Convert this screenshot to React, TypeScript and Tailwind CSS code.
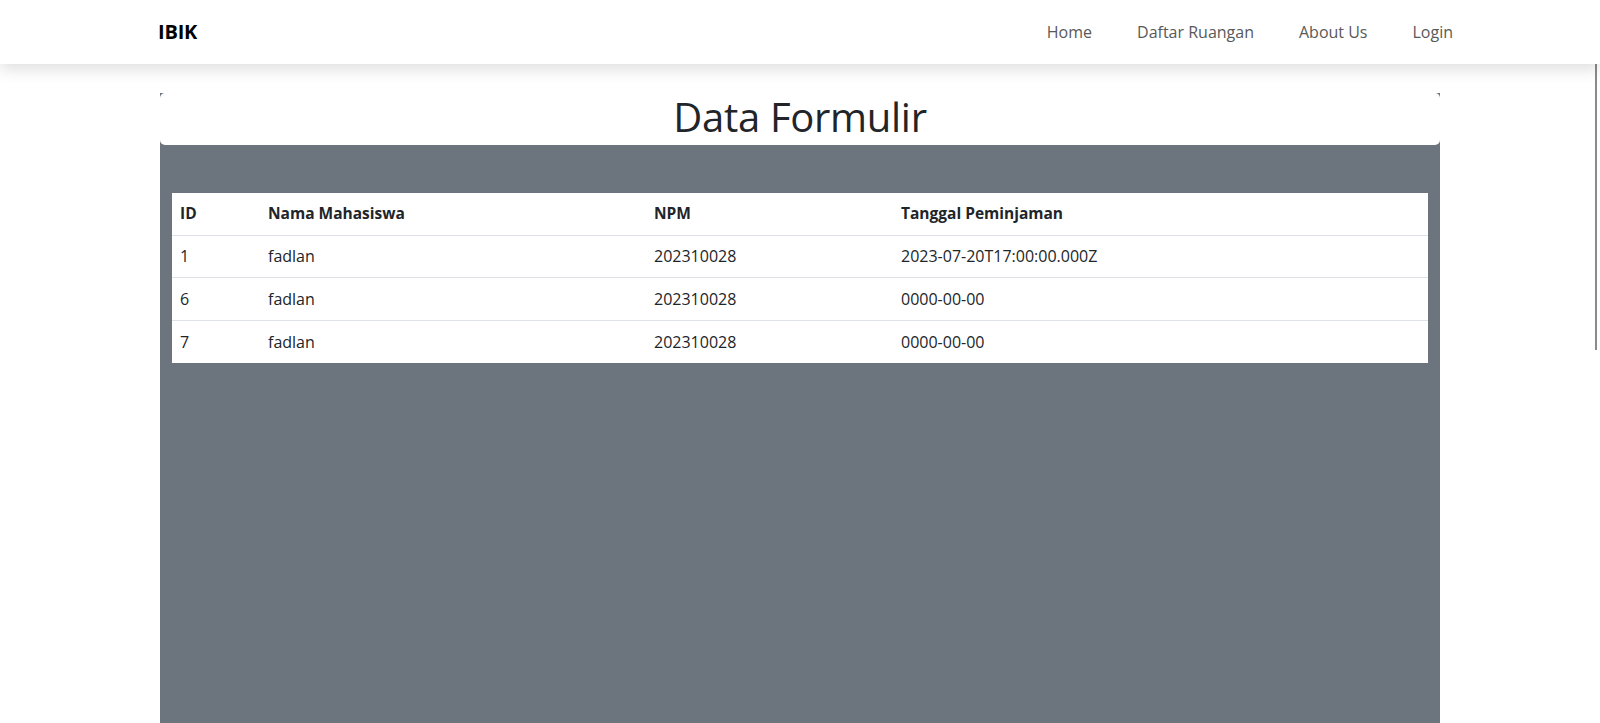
import React from "react";

const rows = [
  { id: "1", nama: "fadlan", npm: "202310028", tgl: "2023-07-20T17:00:00.000Z" },
  { id: "6", nama: "fadlan", npm: "202310028", tgl: "0000-00-00" },
  { id: "7", nama: "fadlan", npm: "202310028", tgl: "0000-00-00" },
];

export default function App() {
  return (
    <div
      className="relative h-[723px] overflow-hidden bg-white text-[#212529]"
      style={{ fontFamily: '"Open Sans", "Noto Sans", Arial, sans-serif' }}
    >
      <nav className="relative z-10 flex h-16 items-center justify-between bg-white pl-[158px] pr-[147px] shadow-[0_6px_14px_rgba(0,0,0,0.12)]">
        <span className="text-[20px] font-bold tracking-[-0.2px] text-black">IBIK</span>
        <div className="flex items-center gap-[45px] text-[16px] text-[#595959]">
          <a>Home</a>
          <a>Daftar Ruangan</a>
          <a>About Us</a>
          <a>Login</a>
        </div>
      </nav>

      <div className="mx-auto mt-[29px] w-[1280px] bg-[#6c757d]">
        <div className="flex h-[52px] items-start justify-center rounded-[5px] bg-white">
          <h1 className="text-[40px] font-normal leading-[48px] tracking-[-0.3px] text-[#212529]">
            Data Formulir
          </h1>
        </div>
        <div className="h-[578px] px-3 pt-12">
          <table className="w-[1256px] table-fixed border-collapse bg-white text-[16px]">
            <colgroup>
              <col className="w-[88px]" />
              <col className="w-[386px]" />
              <col className="w-[247px]" />
              <col />
            </colgroup>
            <thead>
              <tr className="border-b border-[#dee2e6] text-left text-[15.5px]">
                <th className="h-[42px] px-2 font-bold">ID</th>
                <th className="px-2 font-bold">Nama Mahasiswa</th>
                <th className="px-2 font-bold">NPM</th>
                <th className="px-2 font-bold">Tanggal Peminjaman</th>
              </tr>
            </thead>
            <tbody>
              {rows.map((r, i) => (
                <tr
                  key={r.id}
                  className={i < rows.length - 1 ? "border-b border-[#dee2e6]" : ""}
                >
                  <td className="h-[42.5px] px-2">{r.id}</td>
                  <td className="px-2">{r.nama}</td>
                  <td className="px-2">{r.npm}</td>
                  <td className="px-2">{r.tgl}</td>
                </tr>
              ))}
            </tbody>
          </table>
        </div>
      </div>

      <div className="absolute right-[3px] top-[10px] h-[340px] w-[2px] bg-[#8a8a8a]" />
    </div>
  );
}
